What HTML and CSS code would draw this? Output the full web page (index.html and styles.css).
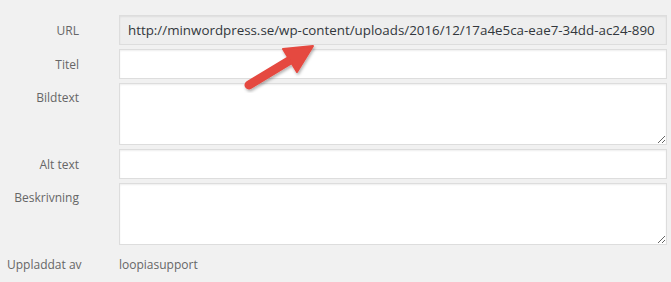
FILE: index.html
```html
<!DOCTYPE html>
<html lang="en">
<head>
    <meta charset="UTF-8">
    <title>Bilddetaljer</title>
    <link rel="stylesheet" href="styles.css">
</head>
<body>
    <div class="details">
        <div class="row">
            <label class="label">URL</label>
            <input type="text" class="field readonly" readonly value="http://minwordpress.se/wp-content/uploads/2016/12/17a4e5ca-eae7-34dd-ac24-890">
        </div>
        <div class="row">
            <label class="label">Titel</label>
            <input type="text" class="field">
        </div>
        <div class="row">
            <label class="label top">Bildtext</label>
            <textarea class="field area"></textarea>
        </div>
        <div class="row">
            <label class="label">Alt text</label>
            <input type="text" class="field">
        </div>
        <div class="row">
            <label class="label top">Beskrivning</label>
            <textarea class="field area"></textarea>
        </div>
        <div class="row meta">
            <span class="label">Uppladdat av</span>
            <span class="value">loopiasupport</span>
        </div>

        <!-- red arrow pointing at the url -->
        <svg class="arrow" width="671" height="282" viewBox="0 0 671 282">
            <defs>
                <filter id="shadow" x="-20%" y="-20%" width="140%" height="140%">
                    <feDropShadow dx="1" dy="2" stdDeviation="1.5" flood-color="#000" flood-opacity="0.3"/>
                </filter>
            </defs>
            <g filter="url(#shadow)" fill="#e5483f" stroke="#e5483f">
                <line x1="249" y1="85" x2="292" y2="59" stroke-width="9" stroke-linecap="round"/>
                <polygon points="313,46 283,49 297,72" stroke-width="2" stroke-linejoin="round"/>
            </g>
        </svg>
    </div>
</body>
</html>
```

FILE: styles.css
```css
body {
    margin: 0;
    background-color: #f1f1f1;
    font-family: 'Segoe UI', 'Open Sans', sans-serif;
    color: #32373c;
}

.details {
    position: relative;
    width: 671px;
    height: 282px;
    padding-top: 15px;
    box-sizing: border-box;
}

.row {
    display: grid;
    grid-template-columns: 79px 548px;
    column-gap: 40px;
    align-items: center;
    margin-bottom: 4px;
}

.label {
    text-align: right;
    font-size: 12px;
    color: #666;
    white-space: nowrap;
}

.label.top {
    align-self: start;
    padding-top: 6px;
}

.field {
    height: 30px;
    margin: 0;
    padding: 3px 8px;
    box-sizing: border-box;
    border: 1px solid #ddd;
    border-radius: 0;
    background-color: #fff;
    box-shadow: inset 0 1px 2px rgba(0, 0, 0, 0.07);
    font-family: 'Segoe UI', 'Open Sans', sans-serif;
    font-size: 13.35px;
    color: #32373c;
    outline: none;
}

.readonly {
    background-color: #eee;
}

.area {
    height: 62px;
    resize: vertical;
}

.meta {
    margin-top: 11px;
}

.meta .label {
    text-align: left;
    padding-left: 7px;
}

.value {
    font-size: 12px;
    color: #666;
}

.arrow {
    position: absolute;
    left: 0;
    top: 0;
}
```
